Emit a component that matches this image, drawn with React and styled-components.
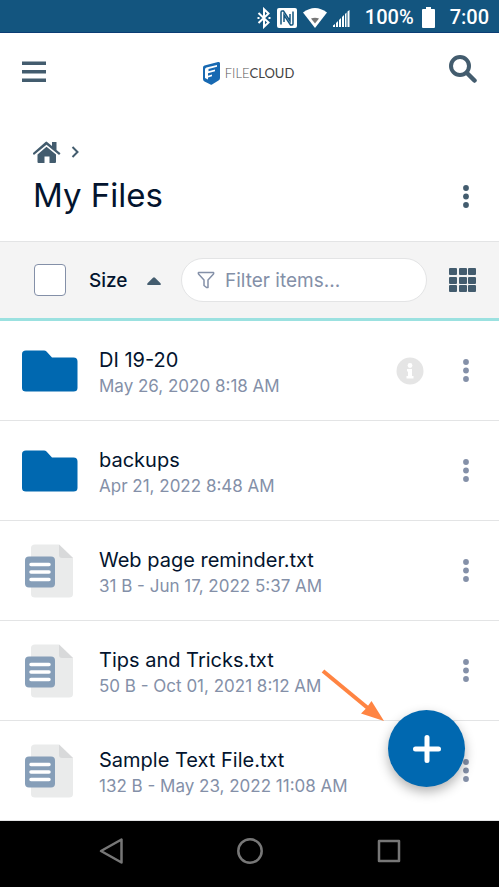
import React from "react";
import styled, { createGlobalStyle } from "styled-components";

const color = {
  status: "#13557f",
  slate: "#435c6e",
  ink: "#03142e",
  muted: "#8490a8",
  line: "#e3e4e5",
  bar: "#f4f4f4",
  brand: "#0068b0",
};

const GlobalStyle = createGlobalStyle`
  *, *::before, *::after { box-sizing: border-box; }
  body { margin: 0; background: #fff; font-family: Inter, "Open Sans", sans-serif; color: ${color.ink}; }
  button, input { font: inherit; color: inherit; }
  svg { display: block; flex: none; }
`;

const Screen = styled.div`
  position: relative;
  display: flex;
  flex-direction: column;
  min-height: 100vh;
`;

const StatusBar = styled.div`
  display: flex;
  align-items: center;
  justify-content: flex-end;
  height: 33px;
  padding: 3px 10px 0 0;
  background: ${color.status};
  border-bottom: 1px solid #0b3d74;
  color: #fff;
  font: 500 20px/29px Roboto, sans-serif;
`;

const StatusIcons = styled.div`
  display: flex;
  align-items: center;
  gap: 6px;
  margin-right: 15px;
`;

const Battery = styled.div`
  margin: 0 15px 0 8px;
`;

const Header = styled.header`
  display: grid;
  grid-template-columns: 1fr auto 1fr;
  align-items: center;
  height: 76px;
  padding: 0 22px 0 20px;
`;

const IconButton = styled.button`
  display: flex;
  align-items: center;
  justify-content: center;
  padding: 0;
  border: 0;
  background: none;
  color: ${(p) => (p.$muted ? color.muted : color.slate)};
  cursor: pointer;
  justify-self: ${(p) => (p.$end ? "end" : "start")};
  width: 28px;
  height: 32px;
  flex: none;
`;

const Logo = styled.a`
  display: flex;
  align-items: center;
  gap: 5px;
  padding-top: 4px;
  color: #555;
  text-decoration: none;
  font: 300 13px/20px Lato, sans-serif;
`;

const LogoText = styled.span`
  color: #555;
  strong { font-weight: 400; color: #444; }
`;

const PageHead = styled.section`
  display: flex;
  align-items: flex-end;
  justify-content: space-between;
  height: 132px;
  padding: 0 19px 24px 33px;
`;

const HeadActions = styled.div`
  display: flex;
  align-items: center;
  height: 42px;
`;

const Crumbs = styled.nav`
  display: flex;
  align-items: center;
  gap: 10px;
  height: 24px;
  margin-bottom: 9px;
  color: ${color.slate};
  a { color: inherit; }
`;

const Title = styled.h1`
  margin: 0;
  font-size: 33px;
  line-height: 44px;
  font-weight: 400;
`;

const Toolbar = styled.div`
  display: flex;
  align-items: center;
  height: 80px;
  padding: 0 22px 0 34px;
  background: ${color.bar};
  border-top: 1px solid ${color.line};
  border-bottom: 3px solid #9be1e0;
`;

const SelectAll = styled.input`
  appearance: none;
  width: 32px;
  height: 32px;
  margin: 0 23px 0 0;
  flex: none;
  border: 1px solid ${color.muted};
  border-radius: 4px;
  background: #fff;
`;

const SortButton = styled.button`
  display: flex;
  align-items: center;
  justify-content: space-between;
  width: 72px;
  padding: 2px 0 0;
  margin-right: 20px;
  border: 0;
  background: none;
  font-size: 19px;
  line-height: 28px;
  font-weight: 500;
  cursor: pointer;
`;

const Filter = styled.label`
  display: flex;
  align-items: center;
  gap: 10px;
  flex: 1;
  min-width: 0;
  height: 44px;
  margin-right: 22px;
  padding: 0 15px;
  border: 1px solid ${color.line};
  border-radius: 22px;
  background: #fff;
  color: ${color.muted};
`;

const FilterInput = styled.input`
  flex: 1;
  min-width: 0;
  padding: 2px 0 0;
  border: 0;
  outline: 0;
  background: none;
  font-size: 19px;
  line-height: 28px;
  &::placeholder { color: ${color.muted}; opacity: 1; }
`;

const FileList = styled.ul`
  flex: 1;
  margin: 0;
  padding: 0;
  list-style: none;
`;

const FileRow = styled.li`
  display: flex;
  align-items: center;
  height: 100px;
  padding: 0 19px 0 22px;
  border-bottom: 1px solid ${color.line};
`;

const FileIcon = styled.div`
  width: 77px;
  flex: none;
`;

const FileText = styled.div`
  flex: 1;
  min-width: 0;
  padding-top: 3px;
`;

const FileName = styled.div`
  font-size: 20px;
  line-height: 28px;
`;

const FileMeta = styled.div`
  color: ${color.muted};
  font-size: 17px;
  line-height: 24px;
`;

const InfoButton = styled(IconButton)`
  margin-right: 28px;
  color: #e5e5e5;
`;

const AddButton = styled.button`
  position: absolute;
  right: 34px;
  bottom: 100px;
  display: flex;
  align-items: center;
  justify-content: center;
  width: 77px;
  height: 77px;
  padding: 0;
  border: 0;
  border-radius: 50%;
  background: ${color.brand};
  color: #fff;
  box-shadow: 0 5px 12px rgba(0, 0, 0, 0.3);
  cursor: pointer;
`;

const Pointer = styled.div`
  position: absolute;
  right: 114px;
  bottom: 165px;
`;

const SystemNav = styled.nav`
  display: flex;
  align-items: center;
  justify-content: space-around;
  height: 66px;
  padding: 0 41px 6px;
  background: #000;
`;

const SystemButton = styled(IconButton)`
  color: #777;
`;

const Bluetooth = () => (
  <svg width="14" height="22" viewBox="0 0 14 22" fill="none" stroke="#fff" strokeWidth="2">
    <path d="M1.500 6l10 9.500L7 19.800V2.200l4.500 4.300-10 9.500" />
    <path d="M0.500 11h2M11.500 11h2" />
  </svg>
);

const Nfc = () => (
  <svg width="20" height="20" viewBox="0 0 20 20">
    <rect width="20" height="20" rx="2" fill="#fff" />
    <path d="M4 16.500V4.500Q4 3 5 3h1.500L13 13V6M16 3.500v12Q16 17 15 17h-1.500L7 7v7" fill="none" stroke={color.status} strokeWidth="1.500" />
  </svg>
);

const Wifi = () => (
  <svg width="24" height="20" viewBox="0 0 24 20">
    <path d="M0 4.500Q12-4.500 24 4.500L12 20z" fill="#fff" />
    <path d="M8 10.500q4-1.500 8 0l-4 5z" fill="#777" />
  </svg>
);

const Signal = () => (
  <svg width="17" height="19" viewBox="0 -2 17 19" fill="#fff">
    <path d="M0 17v-1.500l2-1.500v3zM3 17v-4l2-2v6zM6 17v-7l2-2v9zM9 17V7l2-2v12zM12 17V4l1.500-1.500V17zM14.500 17V1.500L16.500 0v17z" />
  </svg>
);

const BatteryIcon = () => (
  <svg width="13" height="21" viewBox="0 0 13 21" fill="#fff">
    <path d="M4 0h5v2h3q1 0 1 1v17q0 1-1 1H1q-1 0-1-1V3q0-1 1-1h3z" />
  </svg>
);

const MenuIcon = () => (
  <svg width="24" height="24" viewBox="0 0 24 24" fill="currentColor">
    <path d="M0 2.500h24v3.500H0zM0 11h24v3.500H0zM0 19.500h24v3.500H0z" />
  </svg>
);

const SearchIcon = () => (
  <svg width="28" height="32" viewBox="0 0 28 32" fill="none" stroke="currentColor">
    <circle cx="11" cy="11" r="9" strokeWidth="4" />
    <path d="M18 18l7.500 7.500" strokeWidth="4.500" strokeLinecap="round" />
  </svg>
);

const LogoMark = () => (
  <svg width="17" height="23" viewBox="0 0 17 23">
    <path d="M0 5.500Q0 4 1.500 3.500L15 0q2-.3 2 1.500V16q0 1.500-1.500 2.500L9 22.500q-.7.5-1.500 0l-6-3Q0 18.500 0 17z" fill="#1769b2" />
    <path d="M2 7.500Q2 6 3.500 5.500L14 3v1.700L5.500 7v2.300L12 7.600v1.700L5 11.300v2.400L9 12.600v1.700l-4 1.200v2L2 16z" fill="#fff" />
  </svg>
);

const HomeIcon = () => (
  <svg width="28" height="23" viewBox="0 0 28 23" fill="currentColor">
    <path d="M13.500.5L19 5V1h4.500v8l4 3.200-1.400 1.700L13.500 3.700.9 13.900-.3 12.300 12.500 1z" />
    <path d="M13.500 5.800L23 13.500V21q0 1-1 1h-5.500v-6.500h-5V22H5.500q-1 0-1-1v-7.500z" />
  </svg>
);

const Chevron = () => (
  <svg width="8" height="14" viewBox="0 0 8 14" fill="none" stroke="currentColor" strokeWidth="2">
    <path d="M1.500 2l5 5-5 5" />
  </svg>
);

const Dots = () => (
  <svg width="6" height="23" viewBox="0 0 6 23" fill="currentColor">
    <circle cx="3" cy="3" r="2.900" />
    <circle cx="3" cy="11.500" r="2.900" />
    <circle cx="3" cy="20" r="2.900" />
  </svg>
);

const SortArrow = () => (
  <svg width="14" height="8" viewBox="0 0 14 8">
    <path d="M6 .7q1-.9 2 0l5.500 5.500Q14.500 8 13 8H1Q-.5 8 .5 6.200z" fill={color.slate} />
  </svg>
);

const Funnel = () => (
  <svg width="18" height="18" viewBox="0 0 18 18" fill="none" stroke="currentColor" strokeWidth="1.500" strokeLinejoin="round">
    <path d="M1.500 1.500h15q.5.500 0 1.500L11 9v7.500H9.500L7 14.500V9L1.500 3Q1 2 1.500 1.500z" />
  </svg>
);

const GridIcon = () => (
  <svg width="28" height="25" viewBox="0 0 28 25" fill={color.slate}>
    {[0, 9, 17].map((y) =>
      [0, 10, 19].map((x) => <rect key={`${x}-${y}`} x={x} y={y} width="8" height="7" rx="1" />)
    )}
  </svg>
);

const Folder = () => (
  <svg width="56" height="42" viewBox="0 0 56 42">
    <path d="M4 .5h18q1.500 0 2.500 1L30 7.500h21.500q4 0 4 4V38q0 3.500-4 3.500H4q-4 0-4-3.500V4Q0 .5 4 .5z" fill={color.brand} />
  </svg>
);

const TextFile = () => (
  <svg width="52" height="54" viewBox="0 0 52 54">
    <path d="M13 .5h24L51 14v36q0 3.500-4 3.500H13q-4 0-4-3.500V4Q9 .5 13 .5z" fill="#eaebeb" />
    <path d="M37 .5L51 14H40q-3 0-3-3z" fill="#d8d9da" />
    <rect x="3" y="12.500" width="30" height="31" rx="4" fill="#869eb8" />
    <path d="M9 20.500h18M9 28h18M9 35.500h18" stroke="#fff" strokeWidth="3.500" strokeLinecap="round" />
  </svg>
);

const InfoIcon = () => (
  <svg width="28" height="28" viewBox="0 0 28 28">
    <circle cx="14" cy="14" r="13.500" fill="currentColor" />
    <path d="M11 12h5v7h1.500v2.500h-7V19H12v-4.500h-1z" fill="#fff" />
    <circle cx="14" cy="8.500" r="2.400" fill="#fff" />
  </svg>
);

const Plus = () => (
  <svg width="30" height="30" viewBox="0 0 30 30" stroke="currentColor" strokeWidth="5" strokeLinecap="round">
    <path d="M15 3.500v23M3.500 15h23" />
  </svg>
);

const ArrowIcon = () => (
  <svg width="64" height="54" viewBox="0 0 64 54">
    <path d="M2 3l46 38" stroke="#ff8442" strokeWidth="4" />
    <path d="M63 53L40 45.500l5-5L50.500 33z" fill="#ff8442" />
  </svg>
);

const files = [
  { name: "DI 19-20", meta: "May 26, 2020 8:18 AM", folder: true, info: true },
  { name: "backups", meta: "Apr 21, 2022 8:48 AM", folder: true },
  { name: "Web page reminder.txt", meta: "31 B - Jun 17, 2022 5:37 AM" },
  { name: "Tips and Tricks.txt", meta: "50 B - Oct 01, 2021 8:12 AM" },
  { name: "Sample Text File.txt", meta: "132 B - May 23, 2022 11:08 AM" },
];

export default function App() {
  return (
    <>
      <GlobalStyle />
      <Screen>
        <StatusBar>
          <StatusIcons>
            <Bluetooth />
            <Nfc />
            <Wifi />
            <Signal />
          </StatusIcons>
          <span>100%</span>
          <Battery><BatteryIcon /></Battery>
          <time>7:00</time>
        </StatusBar>
        <Header>
          <IconButton aria-label="Menu"><MenuIcon /></IconButton>
          <Logo href="#" aria-label="FileCloud">
            <LogoMark />
            <LogoText>FILE<strong>CLOUD</strong></LogoText>
          </Logo>
          <IconButton $end aria-label="Search"><SearchIcon /></IconButton>
        </Header>
        <PageHead>
          <div>
            <Crumbs aria-label="Breadcrumb">
              <a href="#" aria-label="Home"><HomeIcon /></a>
              <Chevron />
            </Crumbs>
            <Title>My Files</Title>
          </div>
          <HeadActions>
            <IconButton aria-label="Folder options"><Dots /></IconButton>
          </HeadActions>
        </PageHead>
        <Toolbar>
          <SelectAll type="checkbox" aria-label="Select all" />
          <SortButton>Size<SortArrow /></SortButton>
          <Filter>
            <Funnel />
            <FilterInput type="text" placeholder="Filter items..." aria-label="Filter items" />
          </Filter>
          <IconButton aria-label="Grid view"><GridIcon /></IconButton>
        </Toolbar>
        <FileList>
          {files.map((file) => (
            <FileRow key={file.name}>
              <FileIcon>{file.folder ? <Folder /> : <TextFile />}</FileIcon>
              <FileText>
                <FileName>{file.name}</FileName>
                <FileMeta>{file.meta}</FileMeta>
              </FileText>
              {file.info && <InfoButton aria-label="Details"><InfoIcon /></InfoButton>}
              <IconButton $muted aria-label={`Options for ${file.name}`}><Dots /></IconButton>
            </FileRow>
          ))}
        </FileList>
        <SystemNav aria-label="System">
          <SystemButton aria-label="Back">
            <svg width="26" height="28" viewBox="0 0 26 28" fill="none" stroke="currentColor" strokeWidth="2.500" strokeLinejoin="round">
              <path d="M23.500 2.500v23L3 14z" />
            </svg>
          </SystemButton>
          <SystemButton aria-label="Home screen">
            <svg width="26" height="26" viewBox="0 0 26 26" fill="none" stroke="currentColor" strokeWidth="2.500">
              <circle cx="13" cy="13" r="11.700" />
            </svg>
          </SystemButton>
          <SystemButton aria-label="Recent apps">
            <svg width="24" height="24" viewBox="0 0 24 24" fill="none" stroke="currentColor" strokeWidth="2.500" strokeLinejoin="round">
              <path d="M2 2h20v20H2z" />
            </svg>
          </SystemButton>
        </SystemNav>
        <Pointer aria-hidden="true"><ArrowIcon /></Pointer>
        <AddButton aria-label="Add"><Plus /></AddButton>
      </Screen>
    </>
  );
}
